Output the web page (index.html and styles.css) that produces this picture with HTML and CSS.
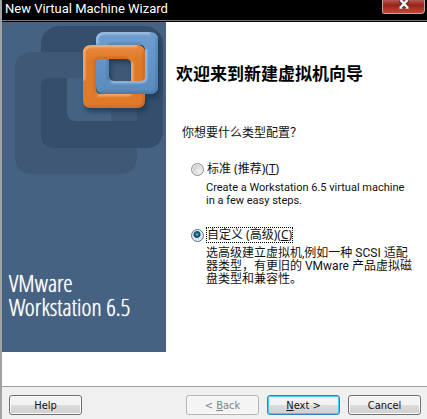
FILE: index.html
```html
<!DOCTYPE html>
<html lang="zh-CN">
<head>
<meta charset="utf-8">
<title>New Virtual Machine Wizard</title>
<link rel="stylesheet" href="styles.css">
</head>
<body>
<form class="window">
  <header class="titlebar">
    <span class="title">New Virtual Machine Wizard</span>
    <button class="close" type="button" aria-label="Close">
      <svg width="12" height="10" viewBox="0 0 12 10"><path d="M2 0L10 8M10 0L2 8" stroke="#4d3338" stroke-width="4"/><path d="M2.500 0L9.500 7.500M9.500 0L2.500 7.500M1.500 7.500H4.500M7.500 7.500H10.500" stroke="#f4f4f4" stroke-width="2.400"/></svg>
    </button>
  </header>
  <div class="content">
    <aside class="banner">
      <svg class="art" width="164" height="160" viewBox="2 22 164 160" aria-hidden="true">
        <defs>
          <linearGradient id="orange" x1="0" y1="0" x2="0" y2="1"><stop offset="0" stop-color="#e8883c"/><stop offset=".25" stop-color="#e07a2b"/><stop offset="1" stop-color="#e07a2b"/></linearGradient>
          <linearGradient id="blue" x1="0" y1="0" x2="0" y2="1"><stop offset="0" stop-color="#6f9fd0"/><stop offset="1" stop-color="#5a89bb"/></linearGradient>
          <filter id="shadow" x="-20%" y="-20%" width="150%" height="150%"><feGaussianBlur stdDeviation="2"/></filter>
          <filter id="soft" x="-20%" y="-20%" width="150%" height="150%"><feGaussianBlur stdDeviation="1"/></filter>
          <path id="outerBlue" d="M104 32H150Q158 32 158 40V86Q158 94 150 94H104Q96 94 96 86V40Q96 32 104 32ZM114 45Q109 45 109 50V76Q109 81 114 81H140Q145 81 145 76V50Q145 45 140 45Z"/>
          <path id="outerOrange" d="M91 45H137Q145 45 145 53V100Q145 108 137 108H91Q83 108 83 100V53Q83 45 91 45ZM101 59Q96 59 96 64V89Q96 94 101 94H126Q131 94 131 89V64Q131 59 126 59Z"/>
          <clipPath id="cb"><use href="#outerBlue" clip-rule="evenodd"/></clipPath>
          <clipPath id="co"><use href="#outerOrange" clip-rule="evenodd"/></clipPath>
          <clipPath id="over"><rect x="109" y="79" width="54" height="34"/></clipPath>
          <g id="blueRing">
            <use href="#outerBlue" fill="url(#blue)" fill-rule="evenodd"/>
            <g clip-path="url(#cb)" fill="none" filter="url(#soft)">
              <path d="M97 44V40Q97 33 104 33H150M111 82H141Q146 82 146 77V49" stroke="#c9dcf0" stroke-width="1.500"/>
              <path d="M99 93H150Q157 93 157 86V38M108 80V48Q108 44 113 44H141" stroke="#355d89" stroke-width="1.500" opacity=".6"/>
            </g>
          </g>
        </defs>
        <rect x="41" y="26" width="122" height="122" rx="18" fill="#354e6b"/>
        <rect x="67" y="52" width="70" height="69" rx="8" fill="#466282"/>
        <path fill="#3e5875" fill-rule="evenodd" d="M33 52H119Q137 52 137 70V156Q137 174 119 174H33Q15 174 15 156V70Q15 52 33 52ZM49 78Q41 78 41 86V140Q41 148 49 148H103Q111 148 111 140V86Q111 78 103 78Z"/>
        <path fill="#354e6b" d="M41 86Q41 78 49 78H67V113Q67 121 75 121H163V130Q163 148 145 148H53Q41 148 41 136Z"/>
        <g fill="#17304d" opacity=".65" filter="url(#shadow)" fill-rule="evenodd" transform="translate(2 4)"><use href="#outerBlue"/><use href="#outerOrange"/></g>
        <use href="#blueRing"/>
        <use href="#outerOrange" fill="url(#orange)" fill-rule="evenodd"/>
        <g clip-path="url(#co)" fill="none" filter="url(#soft)">
          <path d="M84 80V53Q84 46 91 46H137M98 95H127Q132 95 132 90V62" stroke="#ffd0a0" stroke-width="1.500"/>
          <path d="M88 107H137Q144 107 144 100V51M95 92V63Q95 58 100 58H128" stroke="#a74f18" stroke-width="1.500" opacity=".6"/>
        </g>
        <g clip-path="url(#over)"><use href="#blueRing"/></g>
      </svg>
      <p class="product">VMware<br>Workstation 6.5</p>
    </aside>
    <main class="page">
      <h1>欢迎来到新建虚拟机向导</h1>
      <fieldset>
        <legend>你想要什么类型配置？</legend>
        <div class="option">
          <input type="radio" name="config" id="typical">
          <label for="typical"><span class="name">标准 (推荐)(<u>T</u>)</span></label>
          <p class="latin">Create a Workstation 6.5 virtual machine<br>in a few easy steps.</p>
        </div>
        <div class="option">
          <input type="radio" name="config" id="custom" checked>
          <label for="custom"><span class="name focused">自定义 (高级)(<u>C</u>)</span></label>
          <p>选高级建立虚拟机,例如一种 SCSI 适配<br>器类型，有更旧的 VMware 产品虚拟磁<br>盘类型和兼容性。</p>
        </div>
      </fieldset>
    </main>
  </div>
  <footer class="actions">
    <button class="btn help" type="button">Help</button>
    <button class="btn" type="button" disabled>&lt; <u>B</u>ack</button>
    <button class="btn primary" type="button"><u>N</u>ext &gt;</button>
    <button class="btn" type="button">Cancel</button>
  </footer>
</form>
</body>
</html>
```
FILE: styles.css
```css
* { box-sizing: border-box; }
body {
  margin: 0;
  font: 11px/13px "Noto Sans", "Noto Sans CJK SC", sans-serif;
  color: #111;
}
h1, p { margin: 0; }
.window {
  display: flex;
  flex-direction: column;
  min-height: 100vh;
  border-left: 2px solid #a0a3a5;
  background: #fff;
}
.titlebar {
  display: flex;
  justify-content: space-between;
  align-items: flex-start;
  height: 22px;
  padding: 0 2px 0 3px;
  background: linear-gradient(#000 20px, #77727c 20px, #77727c 21px, #000 21px);
  color: #fff;
}
.title { font: 13px/18px Roboto, sans-serif; }
.close {
  display: flex;
  justify-content: center;
  width: 43px;
  height: 14px;
  padding: 0;
  border: 1px solid #c9a29c;
  border-top: 0;
  border-radius: 0 0 4px 2px;
  background: linear-gradient(#b65a50, #9a2418 40%, #c04838);
}
.content { display: flex; flex: 1; }
.banner {
  flex: none;
  width: 164px;
  height: 330px;
  background: #466282;
  color: #fff;
}
.art { display: block; }
.product {
  padding: 89px 0 0 7px;
  font: 300 24px/24px "Open Sans Condensed Light", "Roboto Condensed", sans-serif;
  text-shadow: 0 0 1px #fff;
  white-space: nowrap;
}
.page { flex: 1; padding: 40px 10px 0; }
h1 { font: bold 17px/22px "Noto Sans CJK SC", sans-serif; color: #000; }
fieldset { margin: 41px 0 0; padding: 0 6px; border: 0; }
legend { padding: 0; font-size: 12px; line-height: 16px; }
.option {
  display: grid;
  grid-template-columns: 13px 1fr;
  column-gap: 2px;
  align-items: center;
  padding: 20px 0 0 9px;
}
.option p { grid-column: 2; margin-top: 4px; white-space: nowrap; font: 12px/13px Roboto, "Noto Sans CJK SC", sans-serif; }
.option .latin { font: 11px/13px Roboto, sans-serif; }
.name { display: inline-block; border: 1px solid transparent; font-size: 12px; line-height: 14px; }
.name.focused { border: 1px dotted #000; }
input[type="radio"] {
  appearance: none;
  width: 13px;
  height: 13px;
  margin: 0;
  border: 1px solid #8b8f91;
  border-radius: 50%;
  background: radial-gradient(circle at 65% 65%, #f2f2f2, #bbb);
  box-shadow: inset 0 0 0 1px #eee;
}
input[type="radio"]:checked {
  border-color: #557791;
  background: radial-gradient(circle at 45% 40%, #60c3e2 0, #126084 2px, #103a58 3px, #d9e7ef 4px);
}
.actions {
  display: flex;
  gap: 8px;
  padding: 8px 6px 4px 7px;
  border-top: 1px solid #a0a0a0;
  background: #f0f0f0;
}
.btn {
  width: 73px;
  height: 20px;
  padding: 0;
  border: 1px solid #707070;
  border-radius: 3px;
  background: linear-gradient(#f3f3f3 50%, #ddd 50%, #cfcfcf);
  box-shadow: inset 0 0 0 1px #fafafa;
  color: #111;
  font: 11px/13px "DejaVu Sans Condensed", sans-serif;
}
.btn.help { margin-right: auto; }
.btn:disabled { border-color: #b3b3b3; background: #f4f4f4; color: #838383; }
.btn.primary { border-color: #3c7fb1; box-shadow: inset 0 0 0 1px #43cef1; }
```
